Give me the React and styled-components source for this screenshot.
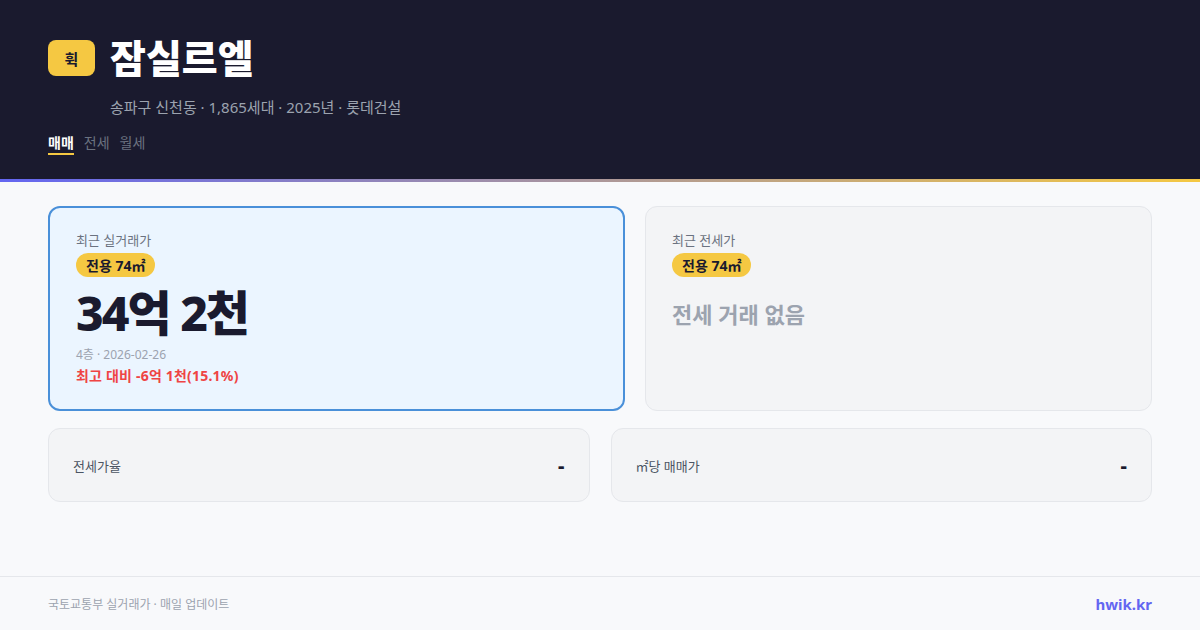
import React from "react";
import styled, { createGlobalStyle } from "styled-components";

const GlobalStyle = createGlobalStyle`
  * { box-sizing: border-box; }
  body {
    margin: 0;
    background: #f8f9fb;
    font-family: "Noto Sans", "Noto Sans CJK KR", sans-serif;
  }
`;

const Page = styled.div`
  width: 1200px;
  height: 630px;
  display: flex;
  flex-direction: column;
  background: #f8f9fb;
  overflow: hidden;
`;

const Header = styled.header`
  background: #1a1a2e;
  padding: 36px 48px 24px;
  border-bottom: 3px solid transparent;
  border-image: linear-gradient(90deg, #6366f1, #f5c842) 1;
`;

const TitleRow = styled.div`
  display: flex;
  align-items: center;
  gap: 15px;
  height: 44px;
`;

const Logo = styled.div`
  width: 47px;
  height: 36px;
  border-radius: 8px;
  background: #f5c842;
  color: #1a1a2e;
  font-size: 15px;
  font-weight: 700;
  display: flex;
  align-items: center;
  justify-content: center;
`;

const Title = styled.h1`
  margin: 0;
  color: #ffffff;
  font-size: 39px;
  font-weight: 800;
  line-height: 44px;
`;

const Subtitle = styled.div`
  margin: 17px 0 0 62px;
  color: #9ca3af;
  font-size: 15px;
  line-height: 20px;
`;

const Tabs = styled.nav`
  display: flex;
  gap: 10px;
  margin-top: 17px;
`;

const Tab = styled.span`
  font-size: 14px;
  line-height: 18px;
  padding-bottom: 1px;
  font-weight: ${(p) => (p.$active ? 700 : 400)};
  color: ${(p) => (p.$active ? "#ffffff" : "#6b7280")};
  border-bottom: 2px solid ${(p) => (p.$active ? "#f5c842" : "transparent")};
`;

const Main = styled.main`
  flex: 1;
  padding: 24px 48px 0;
  display: flex;
  flex-direction: column;
  gap: 17px;
`;

const TopGrid = styled.div`
  display: grid;
  grid-template-columns: 577fr 507fr;
  gap: 20px;
`;

const PriceCard = styled.div`
  border-radius: 12px;
  padding: ${(p) => (p.$highlight ? "24px 26px 23px" : "25px 26px 24px")};
  background: ${(p) => (p.$highlight ? "#ebf5ff" : "#f3f4f6")};
  border: ${(p) => (p.$highlight ? "2px solid #4a90d9" : "1px solid #e5e7eb")};
  display: flex;
  flex-direction: column;
  align-items: flex-start;
`;

const Label = styled.div`
  font-size: 13px;
  line-height: 16px;
  color: #6b7280;
`;

const AreaBadge = styled.span`
  margin-top: 5px;
  height: 24px;
  padding: 0 10px;
  border-radius: 12px;
  background: #f5c842;
  color: #1a1a2e;
  font-size: 14px;
  font-weight: 700;
  display: inline-flex;
  align-items: center;
`;

const Price = styled.div`
  margin-top: 8px;
  font-size: 48px;
  line-height: 55px;
  font-weight: 800;
  letter-spacing: -2px;
  color: #1a1a2e;
`;

const Empty = styled.div`
  margin-top: 22px;
  font-size: 22px;
  line-height: 30px;
  font-weight: 700;
  color: #9ca3af;
`;

const Meta = styled.div`
  margin-top: 7px;
  font-size: 12px;
  line-height: 16px;
  color: #9ca3af;
`;

const Diff = styled.div`
  margin-top: 3px;
  font-size: 14px;
  line-height: 20px;
  font-weight: 700;
  letter-spacing: 0.2px;
  color: #ef4444;
`;

const StatGrid = styled.div`
  display: grid;
  grid-template-columns: 1fr 1fr;
  gap: 21px;
`;

const StatCard = styled.div`
  height: 74px;
  padding: 0 24px;
  border-radius: 12px;
  background: #f3f4f6;
  border: 1px solid #e5e7eb;
  display: flex;
  align-items: center;
  justify-content: space-between;
`;

const StatLabel = styled.span`
  font-size: 13px;
  color: #4b5563;
`;

const StatValue = styled.span`
  font-size: 20px;
  font-weight: 800;
  color: #1a1a2e;
`;

const Footer = styled.footer`
  height: 54px;
  padding: 0 48px;
  border-top: 1px solid #e5e7eb;
  display: flex;
  align-items: center;
  justify-content: space-between;
`;

const Source = styled.span`
  font-size: 12px;
  color: #9ca3af;
`;

const Brand = styled.span`
  font-size: 15px;
  font-weight: 700;
  color: #6366f1;
`;

export default function App() {
  return (
    <Page>
      <GlobalStyle />
      <Header>
        <TitleRow>
          <Logo>휙</Logo>
          <Title>잠실르엘</Title>
        </TitleRow>
        <Subtitle>송파구 신천동 · 1,865세대 · 2025년 · 롯데건설</Subtitle>
        <Tabs>
          <Tab $active>매매</Tab>
          <Tab>전세</Tab>
          <Tab>월세</Tab>
        </Tabs>
      </Header>
      <Main>
        <TopGrid>
          <PriceCard $highlight>
            <Label>최근 실거래가</Label>
            <AreaBadge>전용 74㎡</AreaBadge>
            <Price>34억 2천</Price>
            <Meta>4층 · 2026-02-26</Meta>
            <Diff>최고 대비 -6억 1천(15.1%)</Diff>
          </PriceCard>
          <PriceCard>
            <Label>최근 전세가</Label>
            <AreaBadge>전용 74㎡</AreaBadge>
            <Empty>전세 거래 없음</Empty>
          </PriceCard>
        </TopGrid>
        <StatGrid>
          <StatCard>
            <StatLabel>전세가율</StatLabel>
            <StatValue>-</StatValue>
          </StatCard>
          <StatCard>
            <StatLabel>㎡당 매매가</StatLabel>
            <StatValue>-</StatValue>
          </StatCard>
        </StatGrid>
      </Main>
      <Footer>
        <Source>국토교통부 실거래가 · 매일 업데이트</Source>
        <Brand>hwik.kr</Brand>
      </Footer>
    </Page>
  );
}
